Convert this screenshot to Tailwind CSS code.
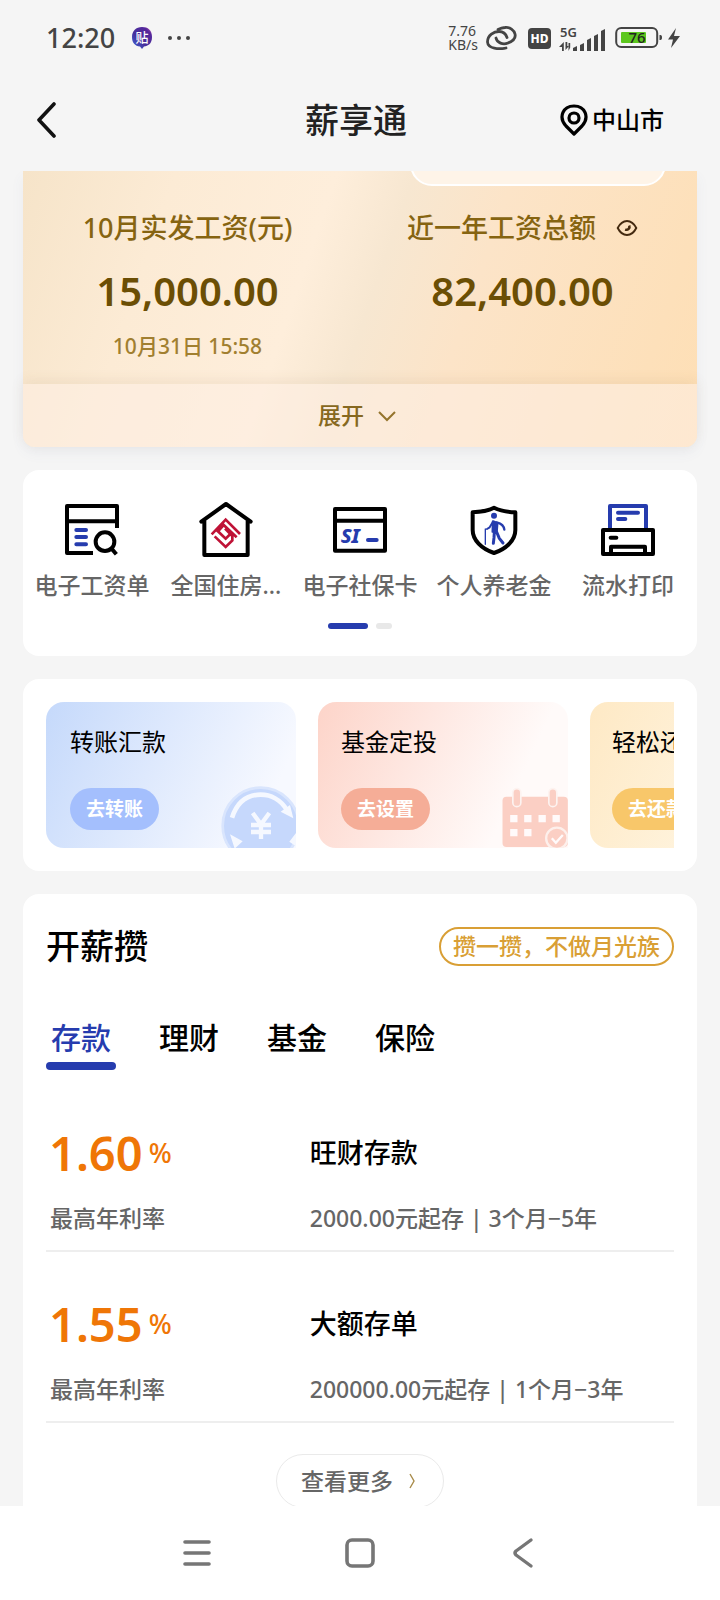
<!DOCTYPE html>
<html lang="zh-CN">
<head>
<meta charset="utf-8">
<meta name="viewport" content="width=device-width, initial-scale=1">
<title>薪享通</title>
<script src="https://cdn.jsdelivr.net/npm/@tailwindcss/browser@4"></script>
</head>
<body class="flex h-screen flex-col overflow-hidden bg-[#f5f5f5] font-['Noto_Sans','Noto_Sans_CJK_SC',sans-serif] font-medium text-black">

<!-- Status bar -->
<div class="flex h-[76px] shrink-0 items-center justify-between pr-[39px] pl-[46px] text-[#444]">
  <div class="flex items-center">
    <span class="text-[27px] leading-8">12:20</span>
    <svg class="ml-4 h-6 w-[22px]" viewBox="0 0 22 24" aria-hidden="true">
      <defs><linearGradient id="badge" x1="0" y1="1" x2="1" y2="0"><stop offset="0" stop-color="#3d6bdc"/><stop offset=".4" stop-color="#46309c"/><stop offset=".8" stop-color="#54279b"/><stop offset="1" stop-color="#d655b8"/></linearGradient></defs>
      <path d="M11 1C17 1 21 4 21 11s-4 9-8 9.500L11 23l-2-2.500C4 20 1 17 1 11S5 1 11 1z" fill="url(#badge)"/>
      <text x="11" y="16" text-anchor="middle" font-size="13" font-weight="500" fill="#fff">贴</text>
    </svg>
    <svg class="ml-[14px] h-1 w-6" viewBox="0 0 24 4" fill="#444" aria-hidden="true"><circle cx="3" cy="2" r="2"/><circle cx="12" cy="2" r="2"/><circle cx="21" cy="2" r="2"/></svg>
  </div>
  <div class="flex items-center gap-2">
    <div class="text-[14px] leading-[14px] font-normal"><div>7.76</div><div>KB/s</div></div>
    <svg class="mr-[3px] h-6 w-[31px]" viewBox="0 0 31 24" fill="none" stroke="#444" stroke-width="2.800" stroke-linecap="round" aria-hidden="true">
      <path d="M10 12c1 5 7 7 12 5 5-2 8-5 7-9S24 1 19 1.500c-3 .2-5 1-7 2"/>
      <path d="M20 22C13 23.500 2 23 1.500 16 1.500 9 8 5.500 13 5.500c5 0 7 3 8 6"/>
    </svg>
    <svg class="h-[21px] w-[23px]" viewBox="0 0 23 21" aria-hidden="true"><rect width="23" height="21" rx="4" fill="#444"/><text x="11.500" y="15" text-anchor="middle" font-size="12" font-weight="800" fill="#fff">HD</text></svg>
    <svg class="h-7 w-[48px]" viewBox="0 -4 48 28" fill="#444" aria-hidden="true">
      <text x="1" y="9" font-size="13" font-weight="600">5G</text>
      <path d="M4.800 14v9H3v-4H0zM6.500 14v8l3.500-4H8.300V14zM9.500 23v-8h1.700v4.500z"/>
      <path d="M14 23v-3l4-2v5zM21 23v-6l4-2v8zM28 23V12l4-2v13zM35 23V8l4-2v17zM42 23V3l4-2v22z"/>
    </svg>
    <svg class="h-6 w-[66px]" viewBox="0 0 66 24" aria-hidden="true">
      <rect x="1.200" y="2" width="41" height="19" rx="5" fill="none" stroke="#444" stroke-width="2"/>
      <rect x="6" y="6" width="25" height="11" rx="1" fill="#5cc71e"/><path d="M44.500 9h1c1 0 1.500 1 1.500 2.500S46.500 14 45.500 14h-1z" fill="#444"/>
      <text x="22" y="17" text-anchor="middle" font-size="15" font-weight="500" fill="#222">76</text>
      <path d="M61 2 53 13.500h5L56 22l9-12h-6z" fill="#444"/>
    </svg>
  </div>
</div>

<!-- Title bar -->
<header class="grid h-[95px] shrink-0 grid-cols-[1fr_auto_1fr] items-center px-14 pb-2">
  <button type="button" class="-ml-6 justify-self-start p-1" aria-label="返回">
    <svg class="h-9 w-5" viewBox="0 0 20 36" fill="none" stroke="#111" stroke-width="3.600" stroke-linecap="round" stroke-linejoin="round"><path d="M18 2 3 18 18 34"/></svg>
  </button>
  <h1 class="pr-2 text-[34px] leading-10 text-[#222]">薪享通</h1>
  <button type="button" class="flex items-center gap-1 justify-self-end text-[24px] leading-8">
    <svg class="h-8 w-7" viewBox="0 0 28 32" fill="none" stroke="#000" stroke-width="3.200" stroke-linejoin="round" aria-hidden="true"><path d="M14 30 6 22C-2 13 3 2 14 2s16 11 8 20z"/><circle cx="14" cy="14" r="5"/></svg>
    <span>中山市</span>
  </button>
</header>

<main class="flex min-h-0 flex-1 flex-col gap-[23px] overflow-y-auto px-[23px] [scrollbar-width:none]">

  <!-- Salary summary -->
  <section class="relative shrink-0 rounded-b-xl bg-[linear-gradient(109deg,#f6e4c9_0%,#fcebd5_20%,#feeedb_41%,#f7e7d1_51%,#fce4c8_64%,#fde0ba_90%,#fedfb5_100%)] shadow-[0_6px_14px_rgba(80,100,150,0.06)]">
    <div class="absolute inset-x-0 top-0 h-[15px] overflow-hidden">
      <div class="absolute right-[31px] bottom-0 h-12 w-[256px] rounded-[22px] border-2 border-white bg-[#fef4e8]"></div>
    </div>
    <div class="grid h-[213px] grid-cols-2 text-center">
      <div class="pt-[39px] pr-2">
        <h2 class="text-[27px] leading-9 text-[#866411]">10月实发工资(元)</h2>
        <p class="mt-[17px] text-[40px] leading-[56px] font-semibold text-[#6b4e04]">15,000.00</p>
        <p class="mt-[11px] text-[21px] leading-8 text-[#a17f30]">10月31日 15:58</p>
      </div>
      <div class="pt-[39px] pr-3">
        <div class="flex items-center justify-center gap-5">
          <h2 class="text-[27px] leading-9 text-[#866411]">近一年工资总额</h2>
          <button type="button" aria-label="隐藏金额">
            <svg class="h-4 w-[22px]" viewBox="0 0 66 50" fill="none" stroke="#442a10" stroke-width="6" aria-hidden="true"><path d="M4 25C12 9 22 3 33 3s21 6 29 22C54 41 44 47 33 47S12 41 4 25z"/><path d="M40 17c3 8-4 16-13 13" stroke-width="8"/></svg>
          </button>
        </div>
        <p class="mt-[17px] text-[40px] leading-[56px] font-semibold text-[#6b4e04]">82,400.00</p>
      </div>
    </div>
    <button type="button" class="flex h-[63px] w-full items-center justify-center gap-[14px] rounded-b-xl bg-[#fdeee3]/60 pr-[6px] text-[23px] text-[#866820] shadow-[0_-3px_14px_rgba(120,90,40,0.09)]">
      <span>展开</span>
      <svg class="h-3 w-[18px]" viewBox="0 0 18 12" fill="none" stroke="#94742c" stroke-width="2" aria-hidden="true"><path d="m1 2 8 8 8-8"/></svg>
    </button>
  </section>

  <!-- Shortcuts -->
  <section class="shrink-0 rounded-[16px] bg-white px-0.5 pt-[30px] pb-[27px]">
    <nav class="grid grid-cols-5 text-[23px] leading-[30px] text-[#666]">
      <a href="#" class="flex flex-col items-center gap-3">
        <svg class="size-[58px]" viewBox="129 120 174 174" fill="none" stroke="#000" stroke-width="12" stroke-linejoin="round" aria-hidden="true"><path d="M219 279h-78V138h150v66M141 184h150"/><circle cx="255" cy="245" r="28"/><path d="m273 264 16 19"/><path d="M169 210h29M169 231h29M169 253h29" stroke="#263cae" stroke-linecap="round"/></svg>
        <span>电子工资单</span>
      </a>
      <a href="#" class="flex flex-col items-center gap-3">
        <svg class="size-[58px]" viewBox="531 120 174 174" fill="none" stroke="#000" stroke-width="12" stroke-linejoin="round" stroke-linecap="round" aria-hidden="true"><path d="m544 185 74-53 74 53M553 182v103h130V182"/><path d="m575 223 42-44 43 43M650 232l-39-37-17 19 23 22 14-14M584 229l33 32 20-20v-13l-22-22" stroke="#bf1236" stroke-width="8" stroke-linecap="butt" stroke-linejoin="miter"/></svg>
        <span>全国住房...</span>
      </a>
      <a href="#" class="flex flex-col items-center gap-3">
        <svg class="size-[58px]" viewBox="933 120 174 174" fill="none" stroke="#000" stroke-width="12" stroke-linejoin="round" aria-hidden="true"><path d="M945 147h150v125H945zM945 182h150"/><text x="962" y="250" font-size="61" font-weight="800" font-style="italic" fill="#263cae" stroke="none">SI</text><path d="M1044 240h26" stroke="#263cae" stroke-linecap="round"/></svg>
        <span>电子社保卡</span>
      </a>
      <a href="#" class="flex flex-col items-center gap-3">
        <svg class="size-[58px]" viewBox="316 120 174 174" fill="none" stroke="#000" stroke-width="12" stroke-linejoin="round" stroke-linecap="round" aria-hidden="true"><path d="M403 143c-18 9-40 13-64 14v53c0 30 26 56 64 69 38-13 64-39 64-69v-53c-24-1-46-5-64-14z"/><g stroke="#263cae"><circle cx="403" cy="167" r="9" fill="#263cae" stroke="none"/><path d="M377 207v46" stroke-width="4"/><path d="m399 187-9 15-8 5" stroke-width="6"/><path d="m400 184 13 5-2 26h-12z" fill="#263cae" stroke-width="7"/><path d="M411 187c12 3 22 8 23 22" stroke-width="7"/><path d="m404 216-1 17-2 17M411 216l8 19 11 14" stroke-width="9"/></g></svg>
        <span>个人养老金</span>
      </a>
      <a href="#" class="flex flex-col items-center gap-3">
        <svg class="size-[58px]" viewBox="717 120 174 174" fill="none" stroke="#000" stroke-width="12" stroke-linejoin="round" aria-hidden="true"><path d="M750 206v-68h108v68M774 158h60M774 177h22" stroke="#263cae" stroke-linecap="round"/><path d="M729 210h150v72H729z"/><path d="M753 282v-22h102v22"/><path d="M752 233h17" stroke-linecap="round"/></svg>
        <span>流水打印</span>
      </a>
    </nav>
    <div class="mt-[23px] flex justify-center gap-2" aria-hidden="true">
      <span class="h-1.5 w-10 rounded-full bg-[#263cae]"></span><span class="h-1.5 w-4 rounded-full bg-[#e8e8e8]"></span>
    </div>
  </section>

  <!-- Promotions -->
  <section class="shrink-0 rounded-[16px] bg-white p-[23px]">
    <div class="flex h-[146px] gap-[22px] overflow-hidden">
      <article class="relative flex w-[250px] shrink-0 flex-col items-start justify-between overflow-hidden rounded-[18px] rounded-br-none bg-[linear-gradient(115deg,#c5d9fb_0%,#f7f9ff_85%)] pt-6 pb-[18px] pl-6">
        <h3 class="text-[24px] leading-8 font-normal">转账汇款</h3>
        <svg class="absolute right-0 bottom-0 h-[65px] w-[76px]" viewBox="600 340 228 195" aria-hidden="true"><circle cx="722" cy="468" r="114" fill="#c6d8fc" stroke="#d9e5fd" stroke-width="8"/><path d="M636 444c16-48 48-69 86-69 30 0 60 15 78 45" fill="none" stroke="#f5f8ff" stroke-width="14"/><path d="m820 446-38-20 28-20zM630 494l38 21-24 22zM828 490v40l-20-14z" fill="#f5f8ff"/><path d="m698 430 25 34 25-34M723 464v44M693 466h60M693 487h60" fill="none" stroke="#f5f8ff" stroke-width="13"/></svg>
        <button type="button" class="h-[42px] rounded-full bg-[#a4bffd] px-4 text-[19px] font-bold text-white">去转账</button>
      </article>
      <article class="relative flex w-[250px] shrink-0 flex-col items-start justify-between overflow-hidden rounded-[18px] rounded-br-none bg-[linear-gradient(115deg,#fdd4c9_0%,#fffaf9_75%)] pt-6 pb-[18px] pl-[23px]">
        <h3 class="text-[24px] leading-8 font-normal">基金定投</h3>
        <svg class="absolute right-0 bottom-0 h-[62px] w-[67px]" viewBox="424 348 200 186" aria-hidden="true"><rect x="428" y="380" width="196" height="151" rx="12" fill="#fbcfc4"/><g fill="#fbcfc4" stroke="#fdf3f0" stroke-width="5"><rect x="459" y="356" width="24" height="54" rx="12"/><rect x="567" y="356" width="24" height="54" rx="12"/></g><path d="M451 435h22v22h-22zM493 435h22v22h-22zM536 435h22v22h-22zM578 435h22v22h-22zM451 477h22v22h-22zM493 477h22v22h-22z" fill="#fffafa"/><circle cx="591" cy="505" r="32" fill="#fbcfc4" stroke="#fdf0ec" stroke-width="7"/><path d="m576 505 12 13 21-23" fill="none" stroke="#fffafa" stroke-width="7"/></svg>
        <button type="button" class="h-[42px] rounded-full bg-[#f5ad97] px-4 text-[19px] font-bold text-white">去设置</button>
      </article>
      <article class="flex w-[250px] shrink-0 flex-col items-start justify-between rounded-[18px] bg-[linear-gradient(115deg,#fee9c5_0%,#fff9eb_85%)] pt-6 pb-[18px] pl-[22px]">
        <h3 class="text-[24px] leading-8 font-normal">轻松还款</h3>
        <button type="button" class="h-[42px] rounded-full bg-[#f8c76a] px-4 text-[19px] font-bold text-white">去还款</button>
      </article>
    </div>
  </section>

  <!-- Savings products -->
  <section class="shrink-0 rounded-t-[16px] bg-white px-[23px] pt-[33px] pb-8">
    <div class="flex items-center justify-between">
      <h2 class="text-[34px] leading-[39px]">开薪攒</h2>
      <span class="flex h-[39px] items-center rounded-full border-2 border-[#d99f35] px-3 text-[23px] text-[#d99f35]">攒一攒，不做月光族</span>
    </div>
    <div role="tablist" class="mt-[52px] flex gap-[38px] text-[30px] leading-10">
      <button type="button" role="tab" aria-selected="true" class="flex w-[70px] flex-col items-center gap-1 text-[#263cae]">存款<span class="h-2 w-full rounded-full bg-[#263cae]"></span></button>
      <button type="button" role="tab" aria-selected="false" class="flex w-[70px] flex-col items-center">理财</button>
      <button type="button" role="tab" aria-selected="false" class="flex w-[70px] flex-col items-center">基金</button>
      <button type="button" role="tab" aria-selected="false" class="flex w-[70px] flex-col items-center">保险</button>
    </div>
    <ul class="mt-[11px] text-[23px] leading-[30px] text-[#666]">
      <li class="border-b-2 border-[#eee] pt-11 pb-[17px]">
        <a href="#" class="grid grid-cols-[42%_1fr] items-center gap-y-[22px]">
          <span class="flex items-center gap-1.5 pl-[3px] text-[#ef7606]"><b class="text-[47px] leading-[56px] font-semibold">1.60</b><span class="text-[27px]">%</span></span>
          <span class="text-[27px] text-black">旺财存款</span>
          <span class="pl-1">最高年利率</span>
          <span>2000.00元起存 | 3个月−5年</span>
        </a>
      </li>
      <li class="border-b-2 border-[#eee] pt-11 pb-[17px]">
        <a href="#" class="grid grid-cols-[42%_1fr] items-center gap-y-[22px]">
          <span class="flex items-center gap-1.5 pl-[3px] text-[#ef7606]"><b class="text-[47px] leading-[56px] font-semibold">1.55</b><span class="text-[27px]">%</span></span>
          <span class="text-[27px] text-black">大额存单</span>
          <span class="pl-1">最高年利率</span>
          <span>200000.00元起存 | 1个月−3年</span>
        </a>
      </li>
    </ul>
    <button type="button" class="mx-auto mt-[31px] flex h-[54px] items-center gap-4 rounded-full border border-[#eaeaea] pr-7 pl-6 text-[23px] text-[#666]">
      <span>查看更多</span>
      <svg class="h-4 w-1.5" viewBox="0 0 6 16" fill="none" stroke="#a88b4a" stroke-width="1.400" aria-hidden="true"><path d="m1 1 4 7-4 7"/></svg>
    </button>
  </section>
</main>

<!-- System navigation -->
<nav class="grid h-[94px] shrink-0 grid-cols-3 items-center justify-items-center bg-white px-[16%]" aria-label="系统导航">
  <button type="button" aria-label="菜单"><svg class="size-8" viewBox="0 0 32 32" fill="none" stroke="#767676" stroke-width="3.600" stroke-linecap="round"><path d="M4 5h24M4 16h24M4 27h24"/></svg></button>
  <button type="button" aria-label="主页"><svg class="size-8" viewBox="0 0 32 32" fill="none" stroke="#767676" stroke-width="3.600"><rect x="3" y="3" width="26" height="26" rx="5"/></svg></button>
  <button type="button" aria-label="返回"><svg class="size-8" viewBox="0 0 32 32" fill="none" stroke="#767676" stroke-width="3.400" stroke-linecap="round" stroke-linejoin="round"><path d="M24 3 9 14q-2 2 0 4l15 11"/></svg></button>
</nav>
</body>
</html>
